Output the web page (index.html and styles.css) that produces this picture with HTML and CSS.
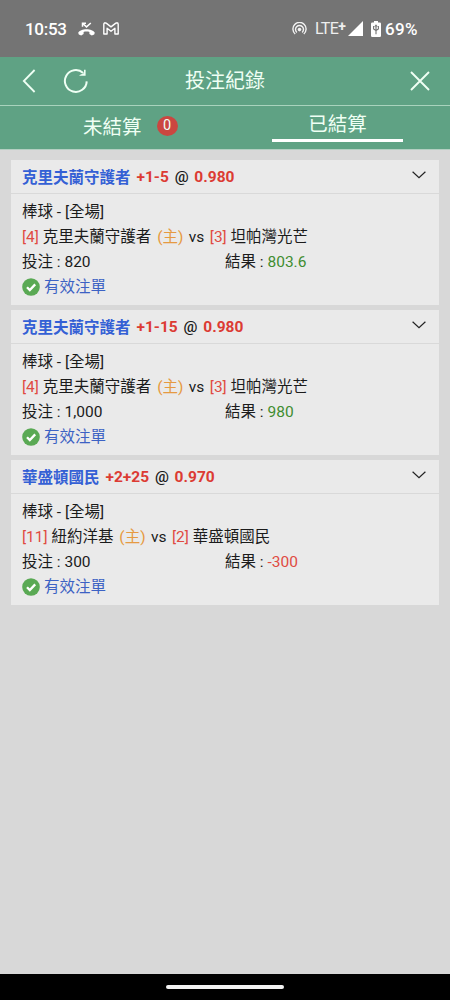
FILE: index.html
```html
<!DOCTYPE html>
<html lang="zh-Hant">
<head>
<meta charset="utf-8">
<title>投注紀錄</title>
<link rel="stylesheet" href="styles.css">
</head>
<body>
<svg width="0" height="0" class="defs">
  <symbol id="chevron" viewBox="0 0 14 8"><path d="M.6 .8L7 6.8L13.4 .8" fill="none" stroke="#222" stroke-width="1.2"/></symbol>
  <symbol id="check" viewBox="0 0 18 18"><circle cx="9" cy="9" r="8.8" fill="#5aa954"/><path d="M5 9.2L7.8 12L13.2 6.4" fill="none" stroke="#fff" stroke-width="2.3"/></symbol>
</svg>
<div class="phone">
  <div class="status">
    <span class="clock">10:53</span>
    <svg class="missed" width="17" height="14" viewBox="0 0 17 14"><path d="M.8 12.6L.2 10.8C2.3 6 14.7 6 16.8 10.8L16.2 12.6L13.8 13.6L11.4 12V10C9.8 9.4 7.2 9.4 5.6 10V12L3.2 13.6Z" fill="#fff"/><path d="M4.5 4.8V1.2H8M4.8 1.5L8.5 4.9L12.8 1" fill="none" stroke="#fff" stroke-width="1.5"/></svg>
    <svg class="gmail" width="16" height="13" viewBox="0 0 16 13"><path d="M.8 12V2.2Q.8 .8 2.2 .8L3.2 1.1L8 4.9L12.8 1.1L13.8 .8Q15.2 .8 15.2 2.2V12H11.9V6.2L8 9.2L4.1 6.2V12Z" fill="none" stroke="#fff" stroke-width="1.4" stroke-linejoin="round"/></svg>
    <svg class="hotspot" width="15" height="13" viewBox="0 0 15 13"><g fill="none" stroke="#f2f2f2" stroke-width="1.4"><path d="M3.2 12A6.6 6.6 0 1 1 11.8 12"/><path d="M4.8 10.4A4 4 0 1 1 10.2 10.4"/></g><circle cx="7.5" cy="7.6" r="1.8" fill="#f2f2f2"/></svg>
    <span class="lte">LTE<b>+</b></span>
    <svg class="signal" width="15" height="15" viewBox="0 0 15 15"><path d="M0 15L15 0V15Z" fill="#fff"/></svg>
    <svg class="battery" width="10" height="16" viewBox="0 0 10 16"><path d="M3 0H7V1.6H8.8Q10 1.6 10 2.8V14.8Q10 16 8.8 16H1.2Q0 16 0 14.8V2.8Q0 1.6 1.2 1.6H3Z" fill="#fff"/><path d="M5 13.2V6M2.6 5V8L5 9.5L7.4 8V5M3.8 5.8L5 4.2L6.2 5.8" fill="none" stroke="#747474" stroke-width="1.1"/></svg>
    <span class="percent">69%</span>
  </div>
  <header class="bar">
    <svg class="back" width="14" height="24" viewBox="0 0 14 24"><path d="M12.6 1L1.8 12L12.6 23" fill="none" stroke="#effff4" stroke-width="1.8"/></svg>
    <svg class="reload" width="26" height="26" viewBox="0 0 26 26"><path d="M23.7 13.4A10.9 10.9 0 1 1 20.2 5" fill="none" stroke="#effff4" stroke-width="2"/><path d="M22.6 1.8V7.8H16L18 6.2L19.8 6L21 4.8V1.8Z" fill="#effff4"/></svg>
    <h1>投注紀錄</h1>
    <svg class="close" width="20" height="20" viewBox="0 0 20 20"><path d="M1 1L19 19M19 1L1 19" fill="none" stroke="#effff4" stroke-width="1.9"/></svg>
  </header>
  <nav class="tabs">
    <div class="tab pending"><span>未結算</span><span class="badge">0</span></div>
    <div class="tab settled"><span>已結算</span></div>
  </nav>
  <main>
    <article class="card">
      <div class="head"><span class="pick">克里夫蘭守護者</span><span class="odds">+1-5 <i>@</i> 0.980</span><svg class="chev"><use href="#chevron"/></svg></div>
      <div class="body">
        <p>棒球 - [全場]</p>
        <p><span class="red">[4]</span> 克里夫蘭守護者 <span class="home">(主)</span> <span class="vs">vs</span> <span class="red">[3]</span> 坦帕灣光芒</p>
        <p class="sums"><span>投注 : 820</span><span>結果 : <span class="win">803.6</span></span></p>
        <p class="valid"><svg class="ok"><use href="#check"/></svg>有效注單</p>
      </div>
    </article>
    <article class="card">
      <div class="head"><span class="pick">克里夫蘭守護者</span><span class="odds">+1-15 <i>@</i> 0.980</span><svg class="chev"><use href="#chevron"/></svg></div>
      <div class="body">
        <p>棒球 - [全場]</p>
        <p><span class="red">[4]</span> 克里夫蘭守護者 <span class="home">(主)</span> <span class="vs">vs</span> <span class="red">[3]</span> 坦帕灣光芒</p>
        <p class="sums"><span>投注 : 1,000</span><span>結果 : <span class="win">980</span></span></p>
        <p class="valid"><svg class="ok"><use href="#check"/></svg>有效注單</p>
      </div>
    </article>
    <article class="card">
      <div class="head"><span class="pick">華盛頓國民</span><span class="odds">+2+25 <i>@</i> 0.970</span><svg class="chev"><use href="#chevron"/></svg></div>
      <div class="body">
        <p>棒球 - [全場]</p>
        <p><span class="red">[11]</span> 紐約洋基 <span class="home">(主)</span> <span class="vs">vs</span> <span class="red">[2]</span> 華盛頓國民</p>
        <p class="sums"><span>投注 : 300</span><span>結果 : <span class="red">-300</span></span></p>
        <p class="valid"><svg class="ok"><use href="#check"/></svg>有效注單</p>
      </div>
    </article>
  </main>
  <footer class="gesture"><div class="pill"></div></footer>
</div>
</body>
</html>
```
FILE: styles.css
```css
* { box-sizing: border-box; }
body { margin: 0; font-family: Roboto, "Noto Sans CJK TC", sans-serif; }
p, h1 { margin: 0; }
svg { display: block; flex: none; }
.defs { position: absolute; }
.phone { width: 450px; height: 1000px; display: flex; flex-direction: column; background: #d8d8d8; overflow: hidden; }

.status { height: 57px; flex: none; display: flex; align-items: center; padding: 0 32px 0 25px; background: #747474; color: #fff; }
.clock { font: 500 17px/20px Roboto, sans-serif; width: 42px; white-space: nowrap; letter-spacing: -.3px; }
.missed { margin-left: 11px; }
.gmail { margin-left: 8px; }
.hotspot { margin-left: auto; }
.lte { margin-left: 8px; width: 30px; font: 400 16px/20px Roboto, sans-serif; letter-spacing: -.6px; color: #eee; white-space: nowrap; display: flex; }
.lte b { font-size: 14px; line-height: 14px; font-weight: 700; }
.signal { margin-left: 3px; }
.battery { margin-left: 8px; }
.percent { margin-left: 4px; width: 33px; font: 500 17px/20px Roboto, sans-serif; letter-spacing: .3px; white-space: nowrap; }

.bar { height: 49px; flex: none; display: flex; align-items: center; padding: 0 20px 0 22px; background: #5fa284; border-bottom: 1px solid #a9d3bd; }
.reload { margin-left: 27px; }
.bar h1 { margin-left: 96px; font-size: 20px; line-height: 28px; font-weight: 400; color: #effff4; }
.close { margin-left: auto; }

.tabs { height: 44px; flex: none; display: grid; grid-template-columns: 1fr 1fr; background: #5fa284; border-bottom: 1px solid #b4cfc2; color: #effff4; font-size: 19.5px; line-height: 28px; }
.tab { display: flex; }
.pending { padding: 8px 0 0 83px; }
.badge { width: 21px; height: 20px; margin: 2px 0 0 15px; border-radius: 50%; background: #cb4640; font-size: 14.5px; line-height: 20px; text-align: center; }
.settled { justify-self: start; width: 131px; height: 36px; margin-left: 47px; padding-top: 5px; justify-content: center; border-bottom: 3px solid #fff; }

main { flex: 1; padding: 10px 11px; display: flex; flex-direction: column; gap: 5px; }
.card { height: 145px; background: #eaeaea; font-size: 15.5px; color: #1b1b1b; }
.head { height: 34px; display: flex; align-items: center; padding: 0 13px 0 11px; border-bottom: 1px solid #d9d9d9; font-weight: 700; }
.pick { margin-top: -2px; color: #3460d5; }
.odds { margin-left: 6px; color: #dc3b33; }
.odds i { margin: 0 1.9px 0 2px; font-style: normal; font-weight: 500; color: #1b1b1b; }
.chev { width: 14px; height: 8px; margin: 0 0 3px auto; }
.body { padding: 6px 11px 0; }
.body p { height: 25px; line-height: 25px; white-space: nowrap; }
.red { color: #e04a42; }
.home { margin: 0 1.5px 0 2px; color: #e69a42; }
.vs { margin-right: 1.7px; }
.win { color: #3f8d30; }
.body .sums { display: grid; grid-template-columns: 1fr 1fr; }
.body .valid { display: flex; align-items: center; gap: 4px; color: #3c62c4; }
.ok { width: 18px; height: 18px; margin-top: -2px; }

.gesture { height: 26px; flex: none; display: flex; justify-content: center; padding-top: 11px; background: #000; }
.pill { width: 118px; height: 4px; border-radius: 2px; background: #f3f3f3; }
```
